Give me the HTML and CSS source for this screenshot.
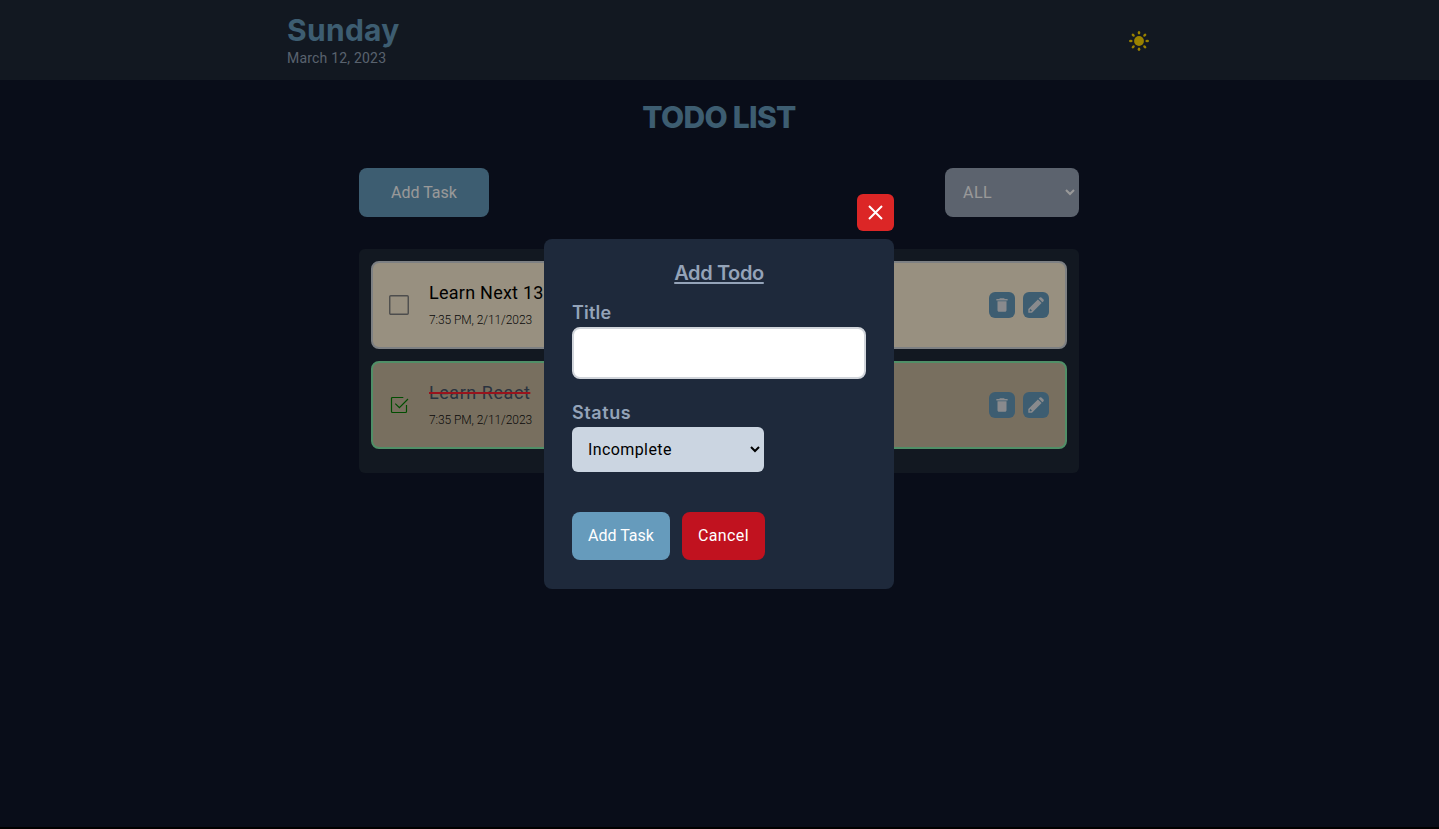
FILE: index.html
```html
<!DOCTYPE html>
<html lang="en">
<head>
<meta charset="utf-8">
<title>Todo List</title>
<link rel="stylesheet" href="styles.css">
</head>
<body>
<svg class="defs" aria-hidden="true">
  <symbol id="trash" viewBox="0 0 512 512"><path d="M128 405.400c0 23.400 19.200 42.600 42.700 42.600h170.600c23.500 0 42.700-19.200 42.700-42.600V149.300H128v256zM416 85.300h-80L313.300 64H198.700L176 85.300H96V128h320V85.300z"/></symbol>
  <symbol id="pencil" viewBox="0 0 18 18"><path fill-rule="evenodd" d="M1.300 13L10.900 3.400L14.600 7.100L5 16.700H1.300zM2.700 13.900V15.300H4.100L4.900 14.500L3.500 13.100z"/><path d="M11.700 2.600L12.800 1.500Q13.600.8 14.400 1.500L16.500 3.600Q17.200 4.400 16.500 5.200L15.400 6.300z"/></symbol>
</svg>
<div class="page">
  <header class="header">
    <div class="header-inner">
      <div class="date-block">
        <h1 class="day">Sunday</h1>
        <p class="date">March 12, 2023</p>
      </div>
      <svg class="sun" viewBox="0 0 20 20"><circle cx="10" cy="10" r="4.9"/><g><ellipse id="ray" cx="10" cy="1.8" rx="1.3" ry="1.8"/><use href="#ray" transform="rotate(45 10 10)"/><use href="#ray" transform="rotate(90 10 10)"/><use href="#ray" transform="rotate(135 10 10)"/><use href="#ray" transform="rotate(180 10 10)"/><use href="#ray" transform="rotate(225 10 10)"/><use href="#ray" transform="rotate(270 10 10)"/><use href="#ray" transform="rotate(315 10 10)"/></g></svg>
    </div>
  </header>
  <main class="main">
    <h2 class="heading">TODO LIST</h2>
    <div class="toolbar">
      <button class="btn add">Add Task</button>
      <div class="filter"><span>ALL</span><svg class="chevron" viewBox="0 0 10 7"><path d="M1 1l4 4 4-4"/></svg></div>
    </div>
    <section class="list">
      <article class="task">
        <svg class="check" viewBox="0 0 20 20"><rect x=".75" y=".75" width="18.5" height="18.5" rx="1"/></svg>
        <div class="task-text"><h3 class="task-title">Learn Next 13</h3><p class="task-time">7:35 PM, 2/11/2023</p></div>
        <div class="actions"><button class="icon"><svg><use href="#trash"/></svg></button><button class="icon"><svg><use href="#pencil"/></svg></button></div>
      </article>
      <article class="task done">
        <svg class="check" viewBox="0 0 20 20"><path d="M14.3 2.5H3.500Q2.500 2.500 2.500 3.500v13Q2.500 17.500 3.500 17.500H16.500Q17.500 17.500 17.500 16.500V10M6.300 8.600L10.400 12.700L19 4"/></svg>
        <div class="task-text"><h3 class="task-title">Learn React</h3><p class="task-time">7:35 PM, 2/11/2023</p></div>
        <div class="actions"><button class="icon"><svg><use href="#trash"/></svg></button><button class="icon"><svg><use href="#pencil"/></svg></button></div>
      </article>
    </section>
  </main>
</div>
<div class="overlay">
  <div class="dialog">
    <button class="close"><svg viewBox="0 0 15 15"><path d="M1 1l13 13M14 1L1 14"/></svg></button>
    <form class="modal">
      <h2 class="modal-title">Add Todo</h2>
      <label class="label title-label">Title</label>
      <input class="input" type="text">
      <label class="label status-label">Status</label>
      <div class="select"><span>Incomplete</span><svg class="chevron" viewBox="0 0 10 7"><path d="M1 1l4 4 4-4"/></svg></div>
      <div class="buttons"><button type="button" class="btn submit">Add Task</button><button type="button" class="btn cancel">Cancel</button></div>
    </form>
  </div>
</div>
</body>
</html>
```
FILE: styles.css
```css
* { box-sizing: border-box; margin: 0; padding: 0; }
html { background: #000; }
body { font-family: Roboto, sans-serif; font-size: 16px; line-height: 24px; }
button { font: inherit; border: 0; }
.defs { position: absolute; width: 0; height: 0; }
.page { height: 827px; background: #0f172a; display: flex; flex-direction: column; }
.header { height: 80px; padding-right: 1px; background: #1f2937; display: flex; justify-content: center; }
.header-inner { width: 864px; display: flex; align-items: center; justify-content: space-between; }
.date-block { padding-bottom: 1px; }
.day { font-family: Inter, sans-serif; font-size: 30px; line-height: 36px; font-weight: 700; letter-spacing: .3px; color: #669bbc; }
.date { font-size: 14px; line-height: 20px; letter-spacing: .2px; color: #94a3b8; }
.sun { width: 20px; height: 20px; margin: 1px 2px 0 0; fill: #ffd700; }
.main { width: 721px; margin: 0 auto; padding: 19px 1px 0 0; }
.heading { height: 36px; font-family: Inter, sans-serif; font-size: 30px; line-height: 36px; font-weight: 800; letter-spacing: -.7px; text-align: center; color: #669bbc; }
.toolbar { margin-top: 33px; display: flex; justify-content: space-between; }
.btn { display: flex; align-items: center; justify-content: center; height: 48px; border-radius: 8px; color: #fff; background: #669bbc; }
.add { width: 130px; height: 49px; }
.filter { width: 134px; height: 49px; padding: 0 4px 0 18px; border-radius: 8px; background: #9aa5b8; color: #fff; letter-spacing: .5px; display: flex; align-items: center; justify-content: space-between; }
.chevron { width: 10px; height: 7px; fill: none; stroke: currentColor; stroke-width: 2; }
.list { margin-top: 32px; height: 224px; padding: 12px; border-radius: 6px; background: #1f2937; display: flex; flex-direction: column; gap: 12px; }
.task { height: 88px; padding: 0 16px; border: 2px solid #d1d5db; border-radius: 8px; background: #fdf0d5; display: flex; align-items: center; }
.check { width: 20px; height: 20px; fill: none; stroke: #808080; stroke-width: 1.4; }
.task-text { margin-left: 20px; flex: 1; padding-bottom: 2px; }
.task-title { display: table; font-size: 18px; line-height: 28px; font-weight: 400; letter-spacing: .25px; color: #000; }
.task-time { margin-top: 3px; margin-bottom: -1px; font-size: 12px; line-height: 20px; font-weight: 300; letter-spacing: -.08px; color: #111; }
.actions { display: flex; gap: 8px; }
.icon { width: 26px; height: 26px; border-radius: 6px; background: #669bbc; display: flex; align-items: center; justify-content: center; }
.icon svg { width: 18px; height: 18px; fill: #e5e7eb; }
.done { background: #c9ba9f; border-color: #86efac; }
.done .check { stroke: #008000; stroke-width: 1.2; }
.done .task-title { color: #475569; letter-spacing: .55px; text-decoration-line: line-through; text-decoration-color: #ff2030; text-decoration-thickness: 1.6px; }
.overlay { position: fixed; inset: 0; padding-right: 1px; background: rgba(0, 0, 0, .4); display: flex; justify-content: center; }
.dialog { width: 350px; margin-top: 194px; display: flex; flex-direction: column; align-items: flex-end; gap: 8px; }
.close { width: 37px; height: 37px; border-radius: 6px; background: #dc2626; display: flex; align-items: center; justify-content: center; }
.close svg { width: 15px; height: 15px; fill: none; stroke: #fff; stroke-width: 2; }
.modal { width: 350px; height: 350px; padding: 20px 28px; border-radius: 8px; background: #1e293b; color: #94a3b8; }
.modal-title { font-family: Inter, sans-serif; font-size: 20px; line-height: 28px; font-weight: 600; letter-spacing: -.4px; text-align: center; text-decoration: underline 2px; text-underline-offset: 2px; }
.label { display: block; font-family: Inter, sans-serif; font-size: 18px; line-height: 28px; font-weight: 600; letter-spacing: .2px; }
.title-label { margin-top: 12px; }
.input { display: block; width: 294px; height: 52px; border: 2px solid #d1d5db; border-radius: 8px; background: #fff; }
.status-label { margin-top: 20px; letter-spacing: .6px; }
.select { width: 192px; height: 45px; padding: 0 4px 0 16px; border-radius: 6px; background: #cbd5e1; color: #000; letter-spacing: .4px; display: flex; align-items: center; justify-content: space-between; }
.buttons { margin-top: 40px; display: flex; gap: 12px; }
.submit { width: 98px; }
.cancel { width: 83px; background: #c1121f; letter-spacing: .4px; }
```
